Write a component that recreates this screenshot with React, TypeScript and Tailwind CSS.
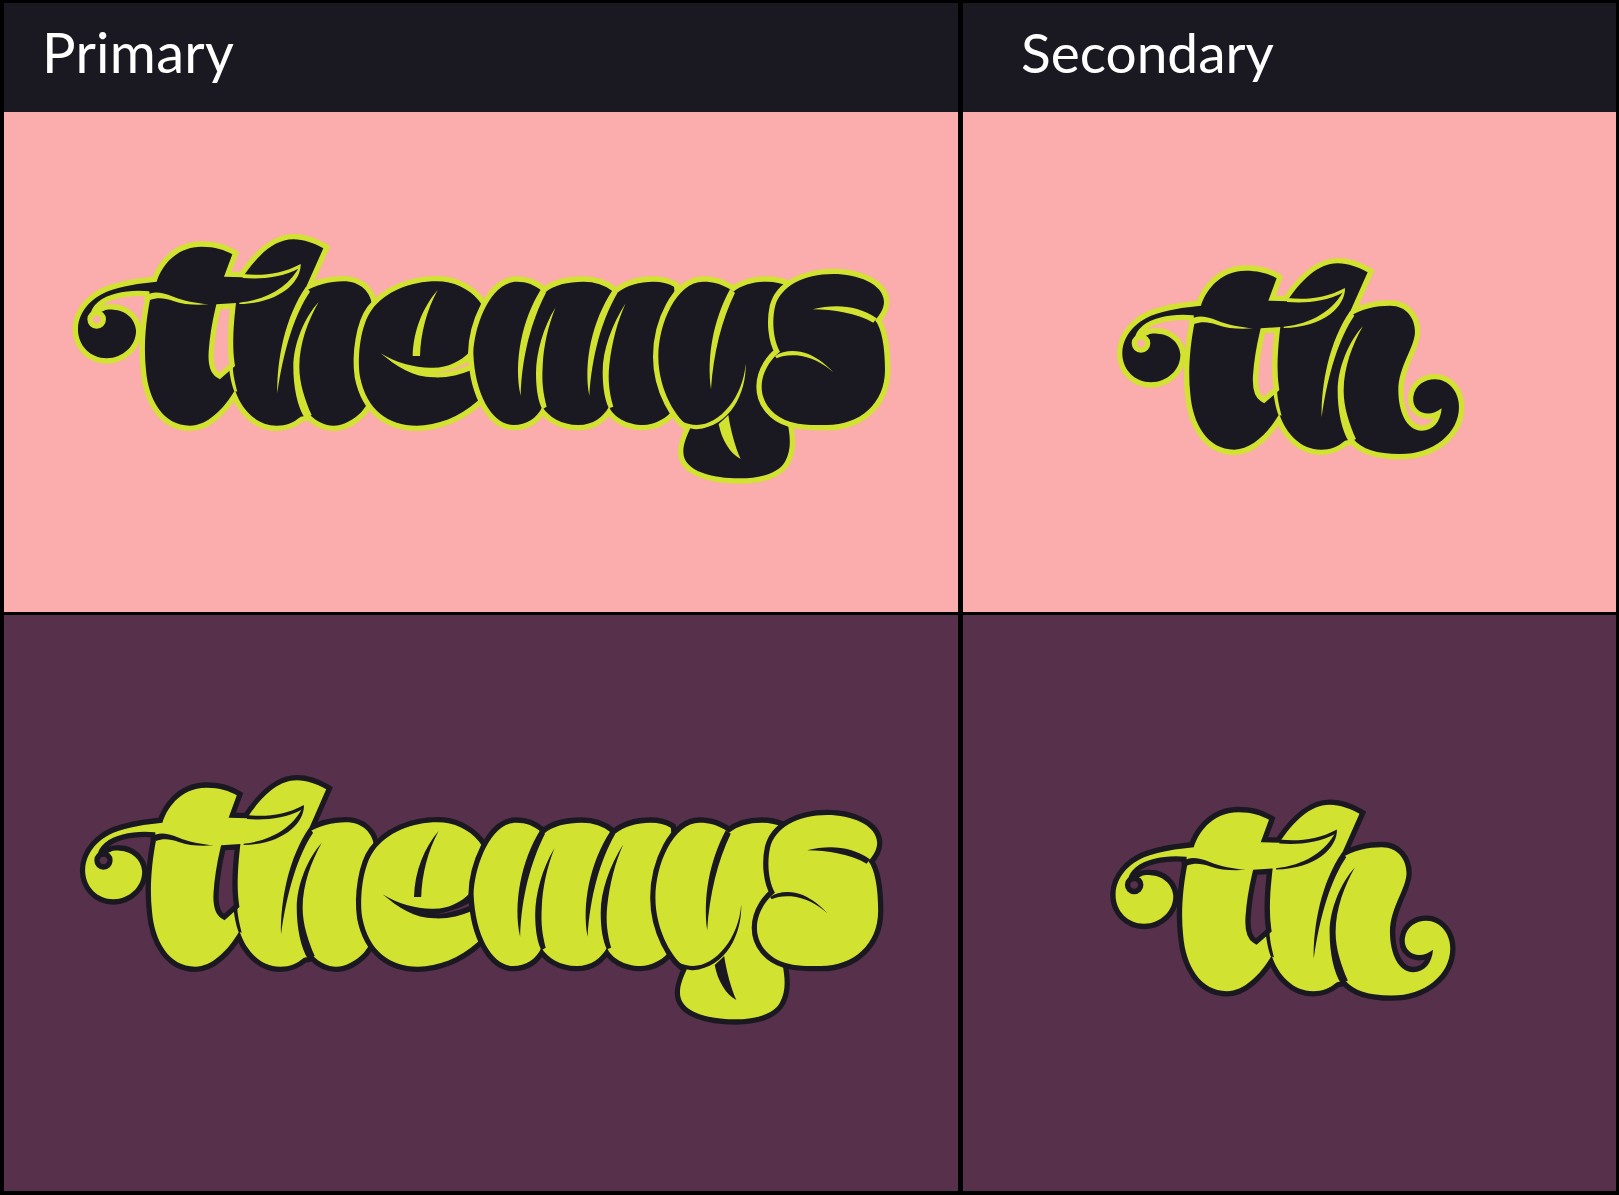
type Palette = { ink: string; line: string; bg: string };

const pinkLogo: Palette = { ink: "#1a1820", line: "#d1e231", bg: "#fbacac" };
const plumLogo: Palette = { ink: "#d1e231", line: "#1a1820", bg: "#57304c" };

// t + swash + h stem, shared by the wordmark and the monogram
const thStem =
  "M290,185 C300,150 340,80 425,80 C465,80 495,90 517,103 L492,170 L548,172 C590,110 640,58 700,58 C730,58 765,70 790,85 L732,215 C710,300 700,450 722,590 C700,608 680,617 650,617 C590,617 545,570 525,510 C490,570 440,617 390,617 C310,617 265,540 258,450 C250,380 258,300 270,240 L268,214 C210,208 150,218 115,245 C100,258 92,272 90,290 L132,272 C140,268 150,268 160,269 C195,270 225,295 228,330 C230,375 190,415 140,415 C90,415 52,375 54,325 C56,270 100,232 140,215 C185,197 240,190 290,185 Z";
const wordArch =
  "M735,215 C765,195 810,184 850,184 C900,184 935,215 937,265 L960,300 L960,500 L905,575 C880,600 850,617 820,617 C795,617 770,605 750,585 L722,590 L690,440 L690,300 Z";
const monoArch =
  "M732,220 C772,193 817,185 857,185 C907,185 932,223 932,263 C932,308 882,368 882,438 C882,503 907,560 952,560 C987,560 1009,533 1012,493 C992,508 972,513 952,505 C932,496 925,478 927,458 C932,423 962,406 992,406 C1032,406 1064,443 1064,488 C1064,568 987,630 887,630 C817,630 772,615 747,585 L722,590 L690,440 L690,300 Z";

const thSlivers = [
  "M262,225 C275,215 300,214 340,230 C370,242 410,250 447,253 C410,256 370,254 340,243 C310,232 290,233 270,240 Z",
  "M548,162 C600,168 660,165 722,132 C720,140 719,143 718,145 C660,175 600,178 548,174 Z",
  "M722,132 C724,185 660,250 538,252 L538,248 C620,240 690,200 722,132 Z",
  "M506,432 L518,430 C518,460 525,490 532,515 L522,512 C514,490 508,460 506,432 Z",
  "M652,520 C650,420 675,290 738,200 L750,215 C705,280 670,390 652,520 Z",
  "M776,246 C735,290 700,370 700,440 C700,500 712,560 735,595 L755,585 C735,540 718,490 718,440 C718,370 745,300 776,246 Z",
];

const thHoles = [
  "M482,268 L510,266 C504,320 500,380 508,432 L478,458 C465,450 460,425 462,395 C465,350 472,310 482,268 Z",
  "M110,287 C117,287 122,292 122,298 C122,305 117,310 110,310 C103,310 98,305 98,298 C98,292 103,287 110,287 Z",
];

const eLetter =
  "M935,270 C975,215 1050,184 1130,184 C1180,184 1225,205 1255,240 L1300,300 L1300,500 L1250,545 C1200,590 1130,617 1070,617 C985,617 920,570 900,470 C890,400 905,310 935,270 Z";
const eSlivers = [
  "M1133,210 C1090,260 1060,330 1058,408 L1080,408 C1082,340 1100,270 1133,210 Z",
  "M962,400 C1010,430 1070,445 1120,443 C1165,442 1200,425 1230,395 L1235,450 C1200,465 1160,474 1120,472 C1060,472 1010,440 962,400 Z",
];
const eGap = "M1120,460 C1160,455 1200,440 1228,425 L1228,435 C1190,450 1150,460 1120,460 Z";

const legs =
  "M-20,310 C-18,230 30,95 110,95 C140,95 165,105 185,122 L195,128 C220,105 265,95 310,95 C345,95 375,105 400,125 L410,130 C440,105 480,95 520,95 C545,95 565,100 582,110 L600,300 L570,490 C550,510 520,525 490,525 C440,525 400,500 387,470 C370,500 340,525 295,525 C245,525 205,500 187,470 C170,505 140,525 100,525 C40,525 -15,440 -20,310 Z";
const legSlivers = [
  "M122,437 C100,340 125,210 183,118 L198,128 C155,210 125,320 122,437 Z",
  "M227,172 C190,230 168,310 168,370 C168,420 175,455 187,478 L200,470 C190,430 185,400 188,350 C190,290 205,225 227,172 Z",
  "M328,437 C310,340 335,215 398,120 L412,130 C365,210 335,320 328,437 Z",
  "M437,160 C395,225 368,300 368,365 C368,415 375,450 387,475 L400,470 C388,430 383,390 388,345 C395,280 412,215 437,160 Z",
];

const yLetter =
  "M535,320 C535,220 590,95 670,95 C700,95 725,103 745,115 L760,125 C785,105 820,95 860,95 C885,95 905,100 925,107 L940,300 L925,530 C930,560 935,600 915,635 C895,670 840,685 780,685 C700,685 610,665 610,605 C610,580 620,560 632,532 C590,510 535,420 535,320 Z";
const ySlivers = [
  "M693,418 C680,320 700,210 750,118 L765,128 C725,210 700,310 693,418 Z",
  "M797,340 C800,430 750,530 650,538 C640,538 625,535 615,525 L570,490 C590,510 620,525 650,525 C720,525 790,440 797,340 Z",
  "M716,522 C725,570 750,610 782,627 C765,590 752,540 745,495 L735,505 Z",
];

const sLetter =
  "M900,305 C880,270 875,215 885,170 C900,110 970,72 1060,72 C1130,72 1210,100 1212,155 C1212,175 1200,195 1185,210 C1205,235 1215,290 1215,360 C1215,460 1140,525 1040,525 C1000,525 960,525 930,515 C880,500 845,460 845,410 C845,360 880,320 900,305 Z";
const sSlivers = [
  "M885,318 C910,300 950,298 985,312 C1015,325 1040,345 1060,367 C1030,340 990,320 950,316 C925,314 905,318 890,325 Z",
  "M998,178 C1060,163 1130,163 1190,205 L1180,218 C1130,190 1060,178 998,178 Z",
];

function Blob({ d, fill, stroke }: { d: string; fill: string; stroke: string }) {
  return <path d={d} fill={fill} stroke={stroke} strokeWidth={32} strokeMiterlimit={4} paintOrder="stroke" />;
}

function Slivers({ list, fill }: { list: string[]; fill: string }) {
  return (
    <>
      {list.map((d) => (
        <path key={d} d={d} fill={fill} />
      ))}
    </>
  );
}

function ThLigature({ arch, colors }: { arch: string; colors: Palette }) {
  return (
    <>
      <Blob d={`${arch} ${thStem}`} fill={colors.ink} stroke={colors.line} />
      <Slivers list={thSlivers} fill={colors.line} />
      {thHoles.map((d) => (
        <Blob key={d} d={d} fill={colors.bg} stroke={colors.line} />
      ))}
    </>
  );
}

function Wordmark({ colors }: { colors: Palette }) {
  return (
    <>
      <g transform="translate(60 220) scale(.33333)">
        <ThLigature arch={wordArch} colors={colors} />
        <Blob d={eLetter} fill={colors.ink} stroke={colors.line} />
        <Slivers list={eSlivers} fill={colors.line} />
        <path d={eGap} fill={colors.bg} />
      </g>
      <g transform="translate(480 250) scale(.33333)">
        <Blob d={legs} fill={colors.ink} stroke={colors.line} />
        <Slivers list={legSlivers} fill={colors.line} />
        <Blob d={yLetter} fill={colors.ink} stroke={colors.line} />
        <Slivers list={ySlivers} fill={colors.line} />
        <Blob d={sLetter} fill={colors.ink} stroke={colors.line} />
        <Slivers list={sSlivers} fill={colors.line} />
      </g>
    </>
  );
}

function Monogram({ colors }: { colors: Palette }) {
  return (
    <g transform="translate(1104.33 244) scale(.33333)">
      <ThLigature arch={monoArch} colors={colors} />
    </g>
  );
}

export default function App() {
  return (
    <div className="w-[1619px] h-[1195px] bg-black pt-[3px] pl-[4px] grid grid-cols-[954px_653px] grid-rows-[109px_500px_579px] gap-x-[5px] font-['Lato',sans-serif] text-white">
      <div className="bg-[#1a1820] pl-[38px] pt-[16px] text-[56px] leading-[66px] tracking-[0.3px]">Primary</div>
      <div className="bg-[#1a1820] pl-[58px] pt-[16px] text-[55px] leading-[66px]">Secondary</div>

      <div className="bg-[#fbacac]">
        <svg className="block w-full h-full" viewBox="4 112 954 500">
          <Wordmark colors={pinkLogo} />
        </svg>
      </div>
      <div className="bg-[#fbacac]">
        <svg className="block w-full h-full" viewBox="963 112 653 500">
          <Monogram colors={pinkLogo} />
        </svg>
      </div>

      <div className="bg-[#57304c] mt-[3px]">
        <svg className="block w-full h-full" viewBox="4 615 954 576">
          <g transform="matrix(.98265 0 0 1 8.5 541)">
            <Wordmark colors={plumLogo} />
          </g>
        </svg>
      </div>
      <div className="bg-[#57304c] mt-[3px]">
        <svg className="block w-full h-full" viewBox="963 615 653 576">
          <g transform="matrix(.994 0 0 1 0 541.5)">
            <Monogram colors={plumLogo} />
          </g>
        </svg>
      </div>
    </div>
  );
}
